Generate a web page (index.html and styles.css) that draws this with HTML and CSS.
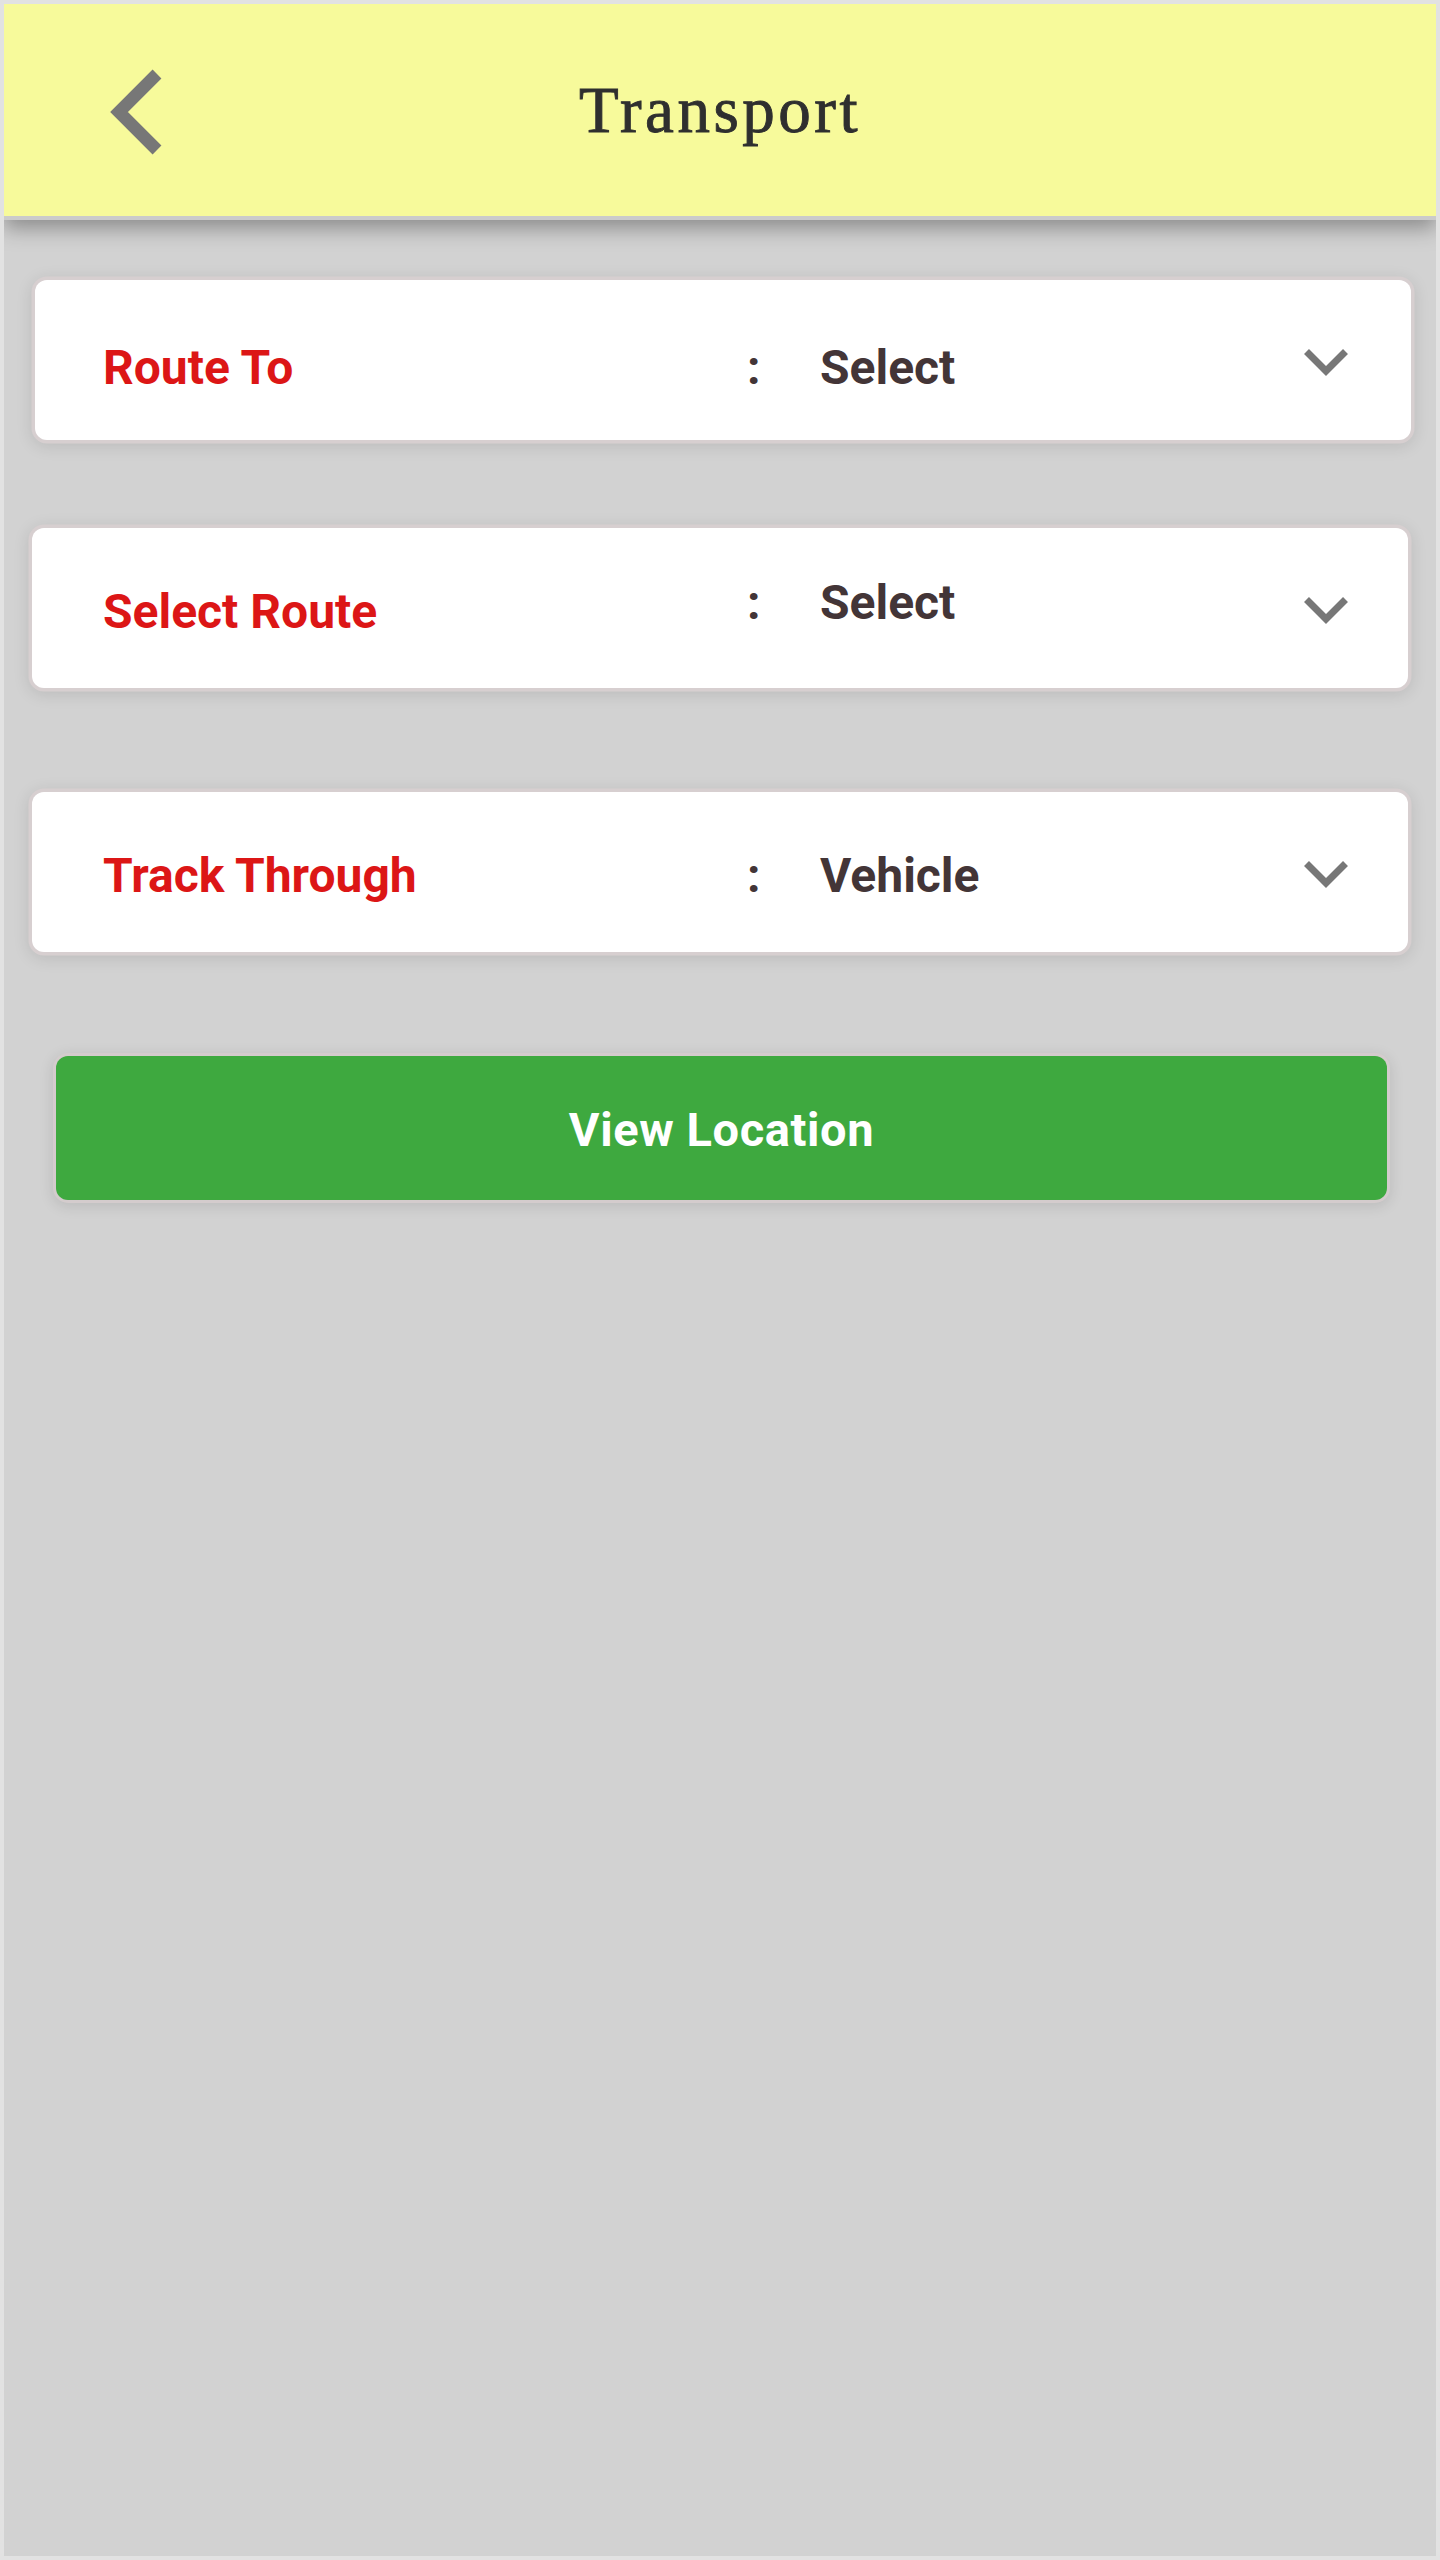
FILE: index.html
```html
<!DOCTYPE html>
<html lang="en">
<head>
<meta charset="utf-8">
<title>Transport</title>
<link rel="stylesheet" href="styles.css">
</head>
<body>
<div class="screen">
  <header class="topbar">
    <button class="back" aria-label="Back">
      <svg width="70" height="110" viewBox="0 0 70 110">
        <polyline points="57,19 19,57 57,95" fill="none" stroke="#777777" stroke-width="12.5" stroke-linejoin="miter"/>
      </svg>
    </button>
    <h1 class="title">Transport</h1>
    <span class="spacer"></span>
  </header>

  <main class="content">
    <div class="card card--first">
      <span class="field-label field-text">Route To</span>
      <span class="field-colon field-text">:</span>
      <span class="field-value field-text">Select</span>
      <svg class="chevron" width="50" height="34" viewBox="0 0 50 34">
        <polyline points="5.5,5.5 25,25 44.5,5.5" fill="none" stroke="#777777" stroke-width="7"/>
      </svg>
    </div>

    <div class="card">
      <span class="field-label field-text">Select Route</span>
      <span class="field-colon field-text field-text--raised">:</span>
      <span class="field-value field-text field-text--raised">Select</span>
      <svg class="chevron" width="50" height="34" viewBox="0 0 50 34">
        <polyline points="5.5,5.5 25,25 44.5,5.5" fill="none" stroke="#777777" stroke-width="7"/>
      </svg>
    </div>

    <div class="card">
      <span class="field-label field-text">Track Through</span>
      <span class="field-colon field-text">:</span>
      <span class="field-value field-text">Vehicle</span>
      <svg class="chevron" width="50" height="34" viewBox="0 0 50 34">
        <polyline points="5.5,5.5 25,25 44.5,5.5" fill="none" stroke="#777777" stroke-width="7"/>
      </svg>
    </div>

    <button class="action">View Location</button>
  </main>
</div>
</body>
</html>
```

FILE: styles.css
```css
* {
  box-sizing: border-box;
}

html, body {
  margin: 0;
  padding: 0;
  background: #e4e4e4;
}

.screen {
  width: 1440px;
  height: 2560px;
  border: 4px solid #e2e2e2;
  background: #d2d2d2;
  overflow: hidden;
  font-family: Roboto, "Liberation Sans", Arial, sans-serif;
}

.topbar {
  height: 216px;
  background: #f7fa9b;
  border-bottom: 4px solid #cbcbcb;
  box-shadow: 0 8px 20px rgba(0, 0, 0, 0.34);
  display: flex;
  align-items: center;
  padding: 0 96px;
  position: relative;
  z-index: 1;
}

.back {
  width: 70px;
  height: 110px;
  padding: 0;
  border: 0;
  background: transparent;
  display: block;
  cursor: pointer;
}

.back svg {
  display: block;
}

.title {
  flex: 1;
  margin: 0;
  text-align: center;
  font-family: "Liberation Serif", "Times New Roman", serif;
  font-weight: 400;
  font-size: 65px;
  letter-spacing: 3.5px;
  color: #2f2f2f;
  line-height: 72px;
  -webkit-text-stroke: 0.9px #2f2f2f;
}

.spacer {
  width: 70px;
  height: 1px;
}

.content {
  padding-top: 60px;
  display: flex;
  flex-direction: column;
}

.card {
  height: 160px;
  margin: 0 28px 104px 28px;
  padding: 0 57px 0 71px;
  background: #ffffff;
  border-radius: 12px;
  box-shadow: 0 0 0 3.5px #d7cfd0, 0 3px 16px 4px rgba(0, 0, 0, 0.10);
  display: grid;
  grid-template-columns: 644px 73px 1fr 50px;
  align-items: center;
}

.card--first {
  margin: 0 25px 88px 31px;
  padding: 0 60px 0 68px;
}

.field-text {
  font-size: 48px;
  font-weight: 700;
  line-height: 56px;
  margin-top: 7px;
  white-space: nowrap;
}

.card--first .field-text {
  margin-top: 15px;
}

.field-text--raised {
  margin-top: 0;
  margin-bottom: 11px;
}

.field-label {
  color: #dc1616;
}

.field-colon {
  color: #433537;
}

.field-value {
  color: #433537;
}

.chevron {
  display: block;
  margin-top: 5px;
}

.action {
  margin: 0 49px 0 52px;
  height: 144px;
  border: 0;
  border-radius: 12px;
  background: #3ea93f;
  color: #ffffff;
  font-family: Roboto, "Liberation Sans", Arial, sans-serif;
  font-size: 47px;
  letter-spacing: 0.6px;
  font-weight: 700;
  padding: 3px 0 0 0;
  box-shadow: 0 0 0 3px #d4cccd, 0 3px 14px 4px rgba(0, 0, 0, 0.10);
  cursor: pointer;
}
```
